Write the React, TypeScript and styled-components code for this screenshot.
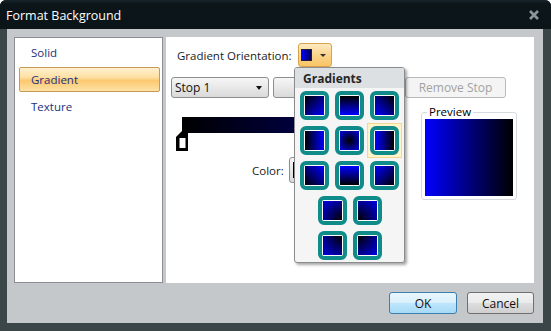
import { createGlobalStyle, styled } from 'styled-components';

const GlobalStyle = createGlobalStyle`
  html, body {
    margin: 0;
    padding: 0;
    background: #ffffff;
  }
  body {
    font-family: 'Open Sans', 'Noto Sans', 'Liberation Sans', sans-serif;
    font-size: 11px;
  }
`;

type Fill = string;

// orientation presets, row by row as they appear in the menu
const GRADIENT_ROWS: Fill[][] = [
  [
    'linear-gradient(to bottom right, #000000, #0000ff)',
    'linear-gradient(to bottom, #000000, #0000ff)',
    'linear-gradient(to bottom left, #000000, #0000ff)',
  ],
  [
    'linear-gradient(to right, #000000, #0000ff)',
    'radial-gradient(circle at 50% 50%, #000000 0, #0000ff 15px)',
    'linear-gradient(to right, #0000ff, #000000)',
  ],
  [
    'linear-gradient(to bottom left, #0000ff, #000000)',
    'linear-gradient(to bottom, #0000ff, #000000)',
    'linear-gradient(to bottom right, #0000ff, #000000)',
  ],
  [
    'radial-gradient(circle at 100% 100%, #000000 0, #0000ff 30px)',
    'radial-gradient(circle at 0% 100%, #000000 0, #0000ff 30px)',
  ],
  [
    'radial-gradient(circle at 100% 0%, #000000 0, #0000ff 30px)',
    'radial-gradient(circle at 0% 0%, #000000 0, #0000ff 30px)',
  ],
];

const App = () => {
  return (
    <>
      <GlobalStyle />
      <Window>
        <TitleBar>
          <Title>Format Background</Title>
          <CloseGlyph width="10" height="10" viewBox="0 0 10 10">
            <path d="M1 1 L9 9 M9 1 L1 9" stroke="#8b969b" strokeWidth="2.6" />
          </CloseGlyph>
        </TitleBar>
        <Frame>
          <Body>
            <Panels>
              <Sidebar>
                <FillItem>Solid</FillItem>
                <FillItem $selected>Gradient</FillItem>
                <FillItem>Texture</FillItem>
              </Sidebar>
              <Editor>
                <OrientationRow>
                  <Label>Gradient Orientation:</Label>
                  <OrientationButton>
                    <Swatch />
                    <Caret />
                  </OrientationButton>
                </OrientationRow>
                <StopRow>
                  <Combo>
                    <span>Stop 1</span>
                    <ComboCaret />
                  </Combo>
                  <PushButton $width={128} />
                  <PushButton $width={101} $disabled>
                    Remove Stop
                  </PushButton>
                </StopRow>
                <Lower>
                  <StopsColumn>
                    <Track>
                      <TrackBar />
                      <StopMarker width="12" height="20" viewBox="0 0 12 20">
                        <path d="M0 6 L6 0 L12 0 L12 20 L0 20 Z" fill="#000" />
                        <rect x="3.5" y="7" width="6" height="10" fill="#fff" />
                      </StopMarker>
                    </Track>
                    <ColorRow>
                      <Label>Color:</Label>
                      <ColorButton>
                        <ColorChip />
                      </ColorButton>
                    </ColorRow>
                  </StopsColumn>
                  <PreviewBox>
                    <PreviewLegend>Preview</PreviewLegend>
                    <PreviewFill />
                  </PreviewBox>
                </Lower>
                <GradientMenu>
                  <MenuHeader>Gradients</MenuHeader>
                  <TileGrid>
                    {GRADIENT_ROWS.map((row, r) => (
                      <TileRow key={r}>
                        {row.map((fill, c) => (
                          <TileCell key={c} $hover={r === 1 && c === 2}>
                            <Tile>
                              <TileFill style={{ background: fill }} />
                            </Tile>
                          </TileCell>
                        ))}
                      </TileRow>
                    ))}
                  </TileGrid>
                </GradientMenu>
              </Editor>
            </Panels>
            <Footer>
              <DialogButton $primary $width={68}>
                OK
              </DialogButton>
              <DialogButton $width={67}>Cancel</DialogButton>
            </Footer>
          </Body>
        </Frame>
      </Window>
    </>
  );
};

export default App;

const Window = styled.div`
  width: 551px;
  height: 331px;
  display: flex;
  flex-direction: column;
  background: #0e181c;
  border-radius: 6px 6px 0 0;
  overflow: hidden;
`;

const TitleBar = styled.div`
  height: 29px;
  flex: none;
  display: flex;
  align-items: center;
  justify-content: space-between;
  padding: 0 12px 0 6px;
  box-sizing: border-box;
  background: linear-gradient(#17242a 0, #0c1519 4px, #0b1417 100%);
`;

const Title = styled.span`
  color: #ffffff;
  font-size: 12.5px;
  padding-top: 1px;
`;

const CloseGlyph = styled.svg`
  display: block;
`;

const Frame = styled.div`
  flex: 1;
  display: flex;
  padding: 0 8px 8px 7px;
  background: #3b4649;
`;

const Body = styled.div`
  flex: 1;
  display: flex;
  flex-direction: column;
  padding: 8px 9px 9px 7px;
  background: #c4c8ca;
`;

const Panels = styled.div`
  height: 246px;
  display: flex;
  gap: 3px;
`;

const Sidebar = styled.div`
  width: 149px;
  box-sizing: border-box;
  border: 1px solid #8d8d95;
  background: #ffffff;
  display: flex;
  flex-direction: column;
  gap: 2px;
  padding: 2px 2px 0 4px;
`;

const FillItem = styled.div<{ $selected?: boolean }>`
  height: 25px;
  display: flex;
  align-items: center;
  padding-left: 11px;
  box-sizing: border-box;
  color: #1d2f80;
  font-size: 11.5px;
  border-radius: 2px;
  border: 1px solid ${(p) => (p.$selected ? '#c49a55' : 'transparent')};
  background: ${(p) =>
    p.$selected
      ? 'linear-gradient(#fff0cf 0%, #fde0a4 40%, #fcc86e 55%, #fde2a6 100%)'
      : 'transparent'};
`;

const Editor = styled.div`
  flex: 1;
  position: relative;
  background: #ffffff;
  padding: 6px 0 0 5px;
  box-sizing: border-box;
`;

const OrientationRow = styled.div`
  display: flex;
  align-items: center;
  gap: 6px;
  padding-left: 6px;
`;

const Label = styled.span`
  color: #1b1b1b;
  font-size: 11.5px;
`;

const OrientationButton = styled.div`
  width: 34px;
  height: 24px;
  box-sizing: border-box;
  border: 1px solid #d9a24f;
  border-radius: 3px;
  background: linear-gradient(#fdeac0, #fbd48c 50%, #f9c465);
  display: flex;
  align-items: center;
  padding: 0 5px 0 2px;
  justify-content: space-between;
`;

const Swatch = styled.div`
  width: 11px;
  height: 12px;
  box-sizing: border-box;
  border: 1px solid #20203a;
  background: linear-gradient(to right, #0000ff, #000050);
`;

const Caret = styled.div`
  width: 0;
  height: 0;
  border-left: 3px solid transparent;
  border-right: 3px solid transparent;
  border-top: 3px solid #333;
`;

const StopRow = styled.div`
  display: flex;
  gap: 4px;
  margin-top: 10px;
`;

const Combo = styled.div`
  width: 98px;
  height: 21px;
  box-sizing: border-box;
  border: 1px solid #8c8e90;
  border-radius: 3px;
  background: linear-gradient(#f6f6f6, #e8e8e8 50%, #dadada);
  display: flex;
  align-items: center;
  justify-content: space-between;
  padding: 0 6px 0 3px;
  font-size: 12px;
  color: #111;
`;

const ComboCaret = styled.div`
  width: 0;
  height: 0;
  border-left: 3.5px solid transparent;
  border-right: 3.5px solid transparent;
  border-top: 4px solid #111;
`;

const PushButton = styled.div<{ $width: number; $disabled?: boolean }>`
  width: ${(p) => p.$width}px;
  height: 21px;
  box-sizing: border-box;
  border: 1px solid ${(p) => (p.$disabled ? '#b9b9b9' : '#8c8e90')};
  border-radius: 3px;
  background: ${(p) =>
    p.$disabled ? '#f4f4f4' : 'linear-gradient(#f6f6f6, #e8e8e8 50%, #dadada)'};
  color: ${(p) => (p.$disabled ? '#a2a2a2' : '#111')};
  display: flex;
  align-items: center;
  justify-content: center;
  font-size: 12px;
`;

const Lower = styled.div`
  display: flex;
  margin-top: 14px;
`;

const StopsColumn = styled.div`
  width: 250px;
  display: flex;
  flex-direction: column;
`;

const Track = styled.div`
  position: relative;
  height: 34px;
  margin-top: 5px;
  padding-left: 11px;
`;

const TrackBar = styled.div`
  width: 222px;
  height: 16px;
  background: linear-gradient(to right, #000000, #00007a);
`;

const StopMarker = styled.svg`
  position: absolute;
  left: 5px;
  top: 14px;
  display: block;
`;

const ColorRow = styled.div`
  display: flex;
  align-items: center;
  gap: 5px;
  padding-left: 81px;
  margin-top: 6px;
`;

const ColorButton = styled.div`
  width: 60px;
  height: 26px;
  box-sizing: border-box;
  border: 1px solid #8c8e90;
  border-radius: 3px;
  background: linear-gradient(#f6f6f6, #dadada);
  display: flex;
  align-items: center;
  padding: 0 3px;
`;

const ColorChip = styled.div`
  width: 30px;
  height: 16px;
  background: #000000;
`;

const PreviewBox = styled.div`
  position: relative;
  width: 96px;
  height: 88px;
  box-sizing: border-box;
  border: 1px solid #d5dadf;
  border-radius: 3px;
  padding: 6px 3px 3px 3px;
`;

const PreviewLegend = styled.span`
  position: absolute;
  top: -8px;
  left: 5px;
  padding: 0 2px;
  background: #ffffff;
  color: #000;
  font-size: 11.5px;
  line-height: 14px;
`;

const PreviewFill = styled.div`
  width: 88px;
  height: 77px;
  background: linear-gradient(to right, #0000ff, #000000);
`;

const GradientMenu = styled.div`
  position: absolute;
  left: 128px;
  top: 30px;
  width: 111px;
  height: 196px;
  box-sizing: border-box;
  border: 1px solid #8a8c8e;
  border-radius: 3px;
  background: #f5f5f5;
  box-shadow: 2px 2px 3px rgba(0, 0, 0, 0.35);
  overflow: hidden;
`;

const MenuHeader = styled.div`
  height: 20px;
  background: #dde0e3;
  display: flex;
  align-items: center;
  padding-left: 8px;
  font-weight: 700;
  font-size: 12px;
  color: #262626;
`;

const TileGrid = styled.div`
  display: flex;
  flex-direction: column;
`;

const TileRow = styled.div`
  display: flex;
  justify-content: center;
`;

const TileCell = styled.div<{ $hover?: boolean }>`
  width: 35px;
  height: 35px;
  box-sizing: border-box;
  display: flex;
  align-items: center;
  justify-content: center;
  border: 1px solid ${(p) => (p.$hover ? '#f0d890' : 'transparent')};
  background: ${(p) => (p.$hover ? '#fff3c9' : 'transparent')};
`;

const Tile = styled.div`
  width: 29px;
  height: 29px;
  box-sizing: border-box;
  border: 4px solid #0f8b8a;
  border-radius: 6px;
  background: #ffffff;
  padding: 1px;
`;

const TileFill = styled.div`
  width: 100%;
  height: 100%;
`;

const Footer = styled.div`
  display: flex;
  justify-content: flex-end;
  gap: 10px;
  margin-top: 9px;
`;

const DialogButton = styled.div<{ $primary?: boolean; $width: number }>`
  width: ${(p) => p.$width}px;
  height: 22px;
  box-sizing: border-box;
  border: 1px solid ${(p) => (p.$primary ? '#3c7fb1' : '#707070')};
  border-radius: 3px;
  background: ${(p) =>
    p.$primary
      ? 'linear-gradient(#eaf6fd, #d9f0fc 50%, #bee6fd 51%, #a7d9f5)'
      : 'linear-gradient(#f2f2f2, #ebebeb 50%, #dddddd 51%, #cfcfcf)'};
  display: flex;
  align-items: center;
  justify-content: center;
  font-size: 12px;
  color: #111;
`;
